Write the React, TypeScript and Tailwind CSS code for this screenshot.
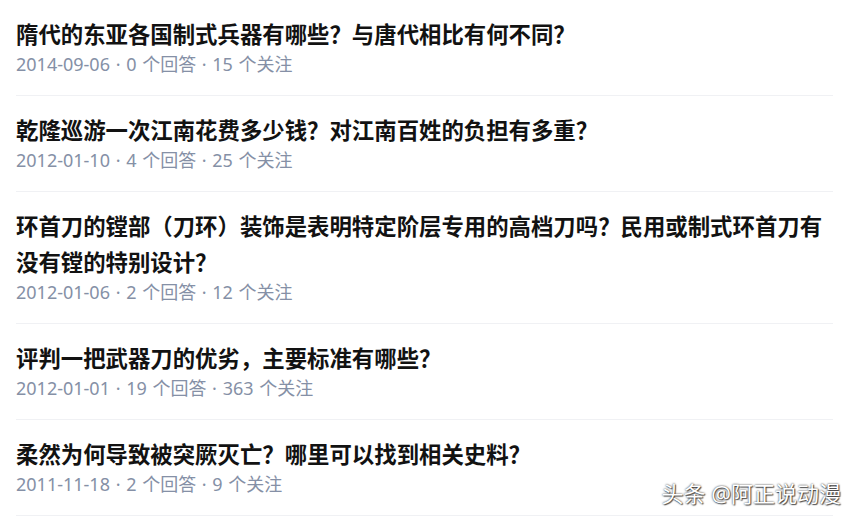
import React from 'react';

type Question = {
  title: string;
  date: string;
  answers: number;
  followers: number;
};

const questions: Question[] = [
  { title: '隋代的东亚各国制式兵器有哪些？与唐代相比有何不同？', date: '2014-09-06', answers: 0, followers: 15 },
  { title: '乾隆巡游一次江南花费多少钱？对江南百姓的负担有多重？', date: '2012-01-10', answers: 4, followers: 25 },
  {
    title: '环首刀的镗部（刀环）装饰是表明特定阶层专用的高档刀吗？民用或制式环首刀有没有镗的特别设计？',
    date: '2012-01-06',
    answers: 2,
    followers: 12,
  },
  { title: '评判一把武器刀的优劣，主要标准有哪些？', date: '2012-01-01', answers: 19, followers: 363 },
  { title: '柔然为何导致被突厥灭亡？哪里可以找到相关史料？', date: '2011-11-18', answers: 2, followers: 9 },
];

function QuestionItem({ q }: { q: Question }) {
  return (
    <div className="border-b border-[#f0f1f4] pt-[15px] pb-[19px]">
      <h2 className="text-[22.4px] font-bold leading-[36px] text-[#121212]">{q.title}</h2>
      <div className="mt-px font-['Noto_Sans','Noto_Sans_CJK_SC',sans-serif] text-[18px] leading-[24px] text-[#8590a6] [word-spacing:1px]">
        {q.date} · {q.answers} 个回答 · {q.followers} 个关注
      </div>
    </div>
  );
}

export default function App() {
  return (
    <div className="relative h-[520px] w-[855px] overflow-hidden bg-white font-['Noto_Sans_CJK_SC','Noto_Sans',sans-serif]">
      <div className="ml-4 w-[817px]">
        {questions.map((q) => (
          <QuestionItem key={q.title} q={q} />
        ))}
      </div>
      <div className="absolute right-[14px] top-[478px] font-['Noto_Sans','Noto_Sans_CJK_SC',sans-serif] text-[22px] leading-[30px] text-white [text-shadow:0_0_2px_rgba(0,0,0,0.9),1px_1px_1px_rgba(0,0,0,0.6)]">
        头条 @阿正说动漫
      </div>
    </div>
  );
}
